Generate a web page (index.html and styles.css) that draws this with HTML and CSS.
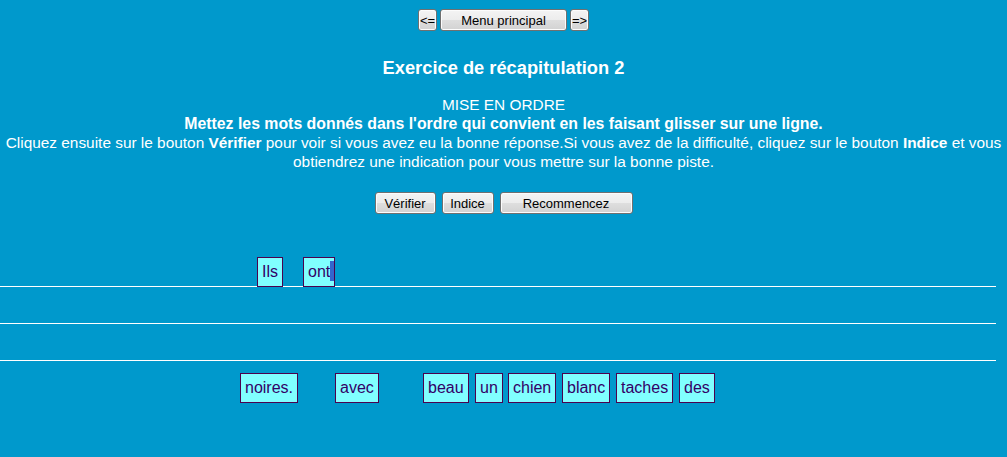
FILE: index.html
```
<!DOCTYPE html>
<html lang="fr">
<head>
<meta charset="utf-8">
<title>Exercice de récapitulation 2</title>
<link rel="stylesheet" href="styles.css">
</head>
<body>
<div class="top">
  <div class="nav">
    <button class="btn small">&lt;=</button>
    <button class="btn menu">Menu principal</button>
    <button class="btn small">=&gt;</button>
  </div>
  <h1 class="title">Exercice de récapitulation 2</h1>
  <div class="instructions">
    <div>MISE EN ORDRE</div>
    <div class="strong">Mettez les mots donnés dans l'ordre qui convient en les faisant glisser sur une ligne.</div>
    <div>Cliquez ensuite sur le bouton <b>Vérifier</b> pour voir si vous avez eu la bonne réponse.Si vous avez de la difficulté, cliquez sur le bouton <b>Indice</b> et vous obtiendrez une indication pour vous mettre sur la bonne piste.</div>
  </div>
  <div class="actions">
    <button class="btn verif">Vérifier</button>
    <button class="btn indice">Indice</button>
    <button class="btn recom">Recommencez</button>
  </div>
</div>
<div class="board">
  <div class="line"></div>
  <div class="line"></div>
  <div class="line"></div>
  <span class="word" style="left:257px;top:0px">Ils</span>
  <span class="word" style="left:303px;top:0px">ont<span class="caret"></span></span>
  <span class="word" style="left:240px;top:116px">noires.</span>
  <span class="word" style="left:335px;top:116px">avec</span>
  <span class="word" style="left:423px;top:116px">beau</span>
  <span class="word" style="left:475px;top:116px">un</span>
  <span class="word" style="left:508px;top:116px">chien</span>
  <span class="word" style="left:562px;top:116px">blanc</span>
  <span class="word" style="left:616px;top:116px">taches</span>
  <span class="word" style="left:679px;top:116px">des</span>
</div>
</body>
</html>
```
FILE: styles.css
```
html, body {
  margin: 0;
  padding: 0;
  background: #0099cc;
  height: 100%;
  overflow: hidden;
}
body {
  font-family: "Liberation Sans", Arial, sans-serif;
  color: #ffffff;
}
.top {
  padding: 9px 4px 0 4px;
  text-align: center;
}
.nav {
  display: flex;
  justify-content: center;
  gap: 3px;
}
.btn {
  font-family: "Liberation Sans", Arial, sans-serif;
  font-size: 13px;
  color: #000;
  height: 22px;
  padding: 0 6px;
  border: 1px solid #707070;
  border-radius: 3px;
  background: linear-gradient(#f4f4f4 0%, #ececec 50%, #dedede 51%, #d2d2d2 100%);
  box-shadow: inset 0 0 0 1px #fcfcfc;
  margin: 0;
}
.small { width: 19px; padding: 0; }
.menu { width: 127px; }
.title {
  font-size: 18.3px;
  font-weight: bold;
  margin: 27px 0 0 0;
  line-height: 20px;
}
.instructions {
  font-size: 15.4px;
  line-height: 19px;
  margin-top: 17px;
}
.strong { font-weight: bold; font-size: 15.85px; }
.actions {
  display: flex;
  justify-content: center;
  gap: 6px;
  margin-top: 21px;
}
.verif { width: 61px; }
.indice { width: 52px; }
.recom { width: 133px; }
.board {
  position: relative;
  margin-top: 43px;
  height: 160px;
}
.line {
  width: 996px;
  height: 36px;
  border-bottom: 1px solid #ffffff;
}
.line:first-child { height: 29px; }
.word {
  position: absolute;
  height: 28px;
  line-height: 28px;
  padding: 0 4px;
  border: 1px solid #4d004d;
  background: #80ffff;
  color: #330066;
  font-size: 16px;
}
.caret {
  display: inline-block;
  width: 4px;
  height: 20px;
  vertical-align: -4px;
  background: #3366cc;
  margin-right: -4px;
}
```
